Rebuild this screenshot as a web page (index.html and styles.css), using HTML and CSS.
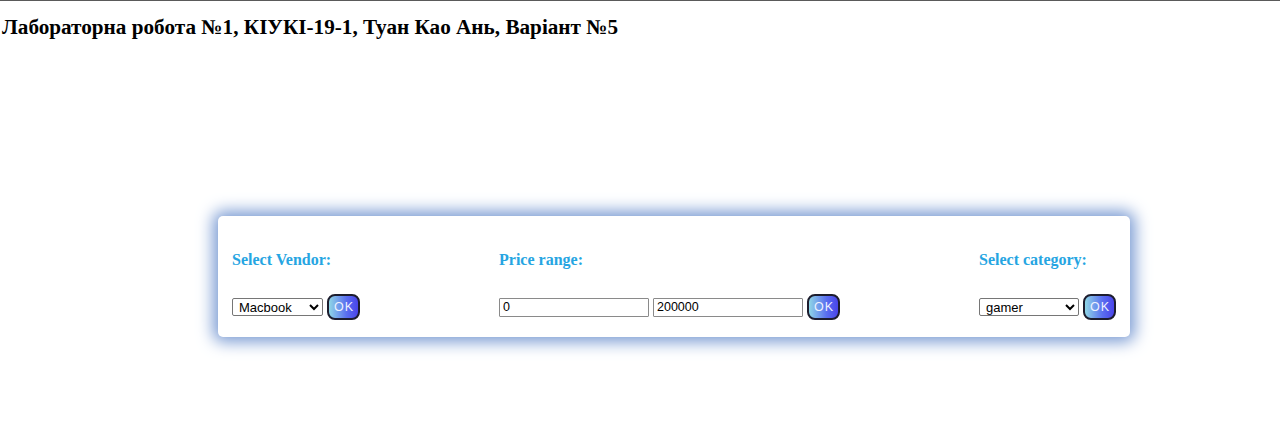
FILE: index.html
```html
<!DOCTYPE html>
<html lang="uk">
<head>
<meta charset="utf-8">
<title>Лабораторна робота №1</title>
<link rel="stylesheet" href="styles.css">
</head>
<body>
<h1 class="title">Лабораторна робота №1, КІУКІ-19-1, Туан Као Ань, Варіант №5</h1>
<div class="card">
  <div class="col">
    <h3 class="label">Select Vendor:</h3>
    <div class="controls">
      <select class="sel sel-vendor"><option>Macbook</option></select>
      <button class="ok">OK</button>
    </div>
  </div>
  <div class="col">
    <h3 class="label">Price range:</h3>
    <div class="controls">
      <input class="inp" type="text" value="0">
      <input class="inp" type="text" value="200000">
      <button class="ok">OK</button>
    </div>
  </div>
  <div class="col">
    <h3 class="label">Select category:</h3>
    <div class="controls">
      <select class="sel sel-cat"><option>gamer</option></select>
      <button class="ok">OK</button>
    </div>
  </div>
</div>
</body>
</html>
```

FILE: styles.css
```css
html, body {
  margin: 0;
  padding: 0;
  background: #ffffff;
}
body {
  border-top: 1px solid #5a5a5a;
  font-family: "Liberation Serif", "Times New Roman", serif;
  color: #000;
  min-height: 420px;
  box-sizing: border-box;
}
.title {
  font-size: 21.2px;
  font-weight: bold;
  margin: 14px 0 0 2px;
  line-height: 24px;
}
.card {
  margin: 177px 150px 0 218px;
  width: 912px;
  box-sizing: border-box;
  background: #fff;
  border-radius: 5px;
  box-shadow: 0 0 16px 5px #7a9bd3;
  padding: 34px 14px 17px 14px;
  display: flex;
  justify-content: space-between;
}
.col {
  display: flex;
  flex-direction: column;
}
.label {
  margin: 0 0 24px 0;
  font-size: 16px;
  line-height: 20px;
  font-weight: bold;
  color: #26a5e2;
}
.controls {
  display: flex;
  align-items: center;
  gap: 4px;
}
.sel {
  font-family: "Liberation Sans", Arial, sans-serif;
  font-size: 13px;
  height: 18px;
  padding: 0 0 0 2px;
  border: 1px solid #767676;
  border-radius: 2px;
  background: #fff;
  color: #000;
  box-sizing: border-box;
}
.sel-vendor { width: 91px; }
.sel-cat { width: 100px; }
.inp {
  font-family: "Liberation Sans", Arial, sans-serif;
  font-size: 12.5px;
  width: 150px;
  height: 19px;
  padding: 0 3px;
  border: 1px solid #8a8a8a;
  border-radius: 1px;
  box-sizing: border-box;
  color: #000;
}
.ok {
  width: 33px;
  height: 26px;
  box-sizing: border-box;
  border: 2px solid #1d1d2e;
  border-radius: 8px;
  background: linear-gradient(to right, #8fd6e6, #5a6ff0 60%, #4a44ea);
  color: #eef2ff;
  font-family: "Liberation Sans", Arial, sans-serif;
  font-size: 12.5px;
  letter-spacing: 1px;
  padding: 0 0 0 1px;
  cursor: pointer;
}
```
